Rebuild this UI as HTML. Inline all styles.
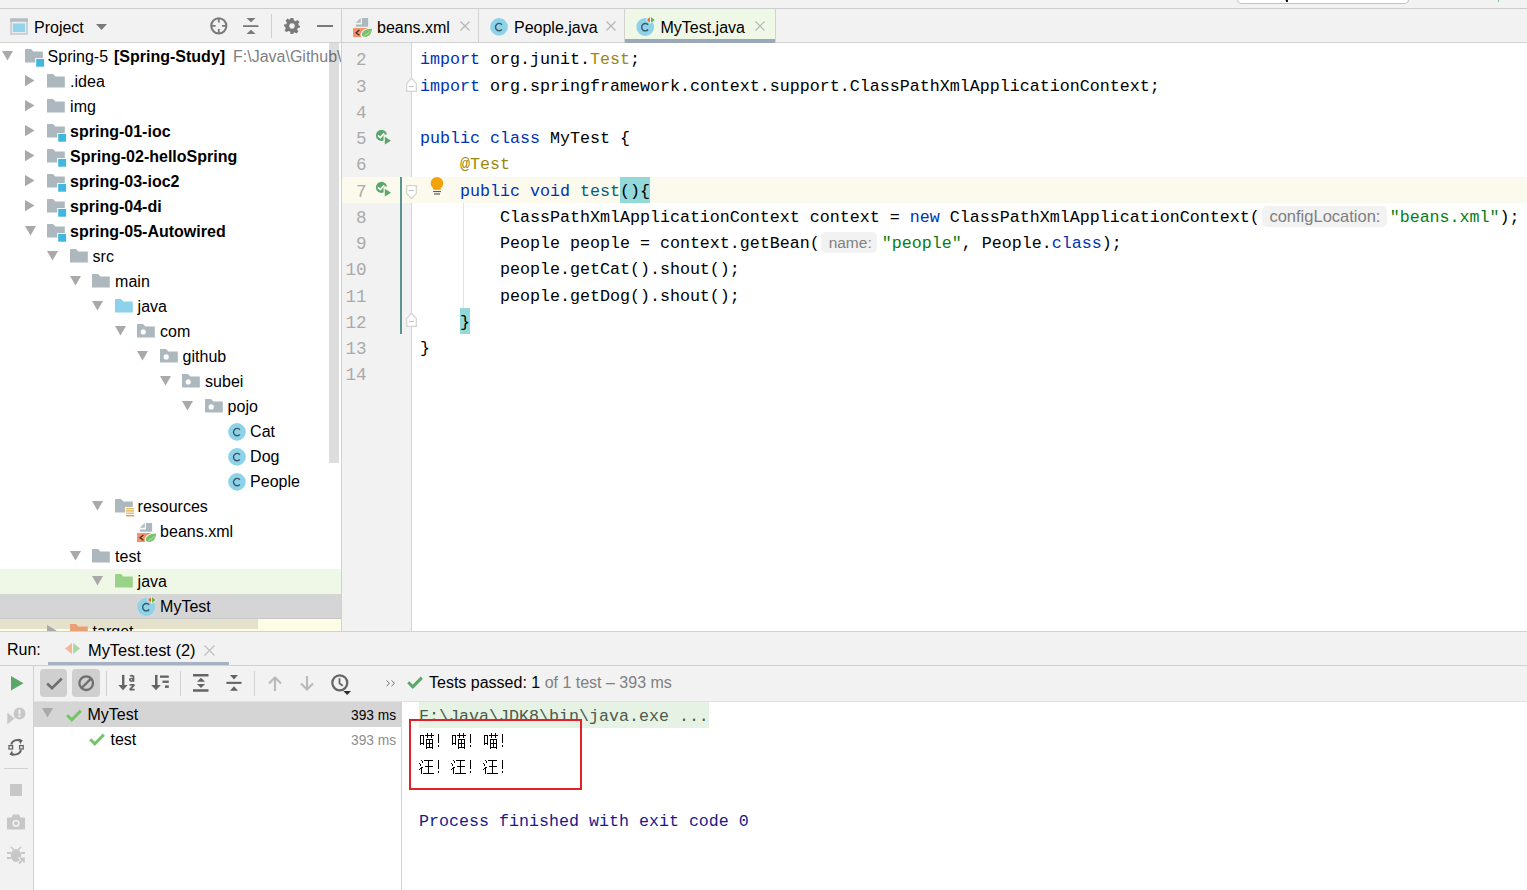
<!DOCTYPE html>
<html><head><meta charset="utf-8">
<style>
*{margin:0;padding:0;box-sizing:border-box}
html,body{width:1527px;height:890px;overflow:hidden;background:#f2f2f2}
body{position:relative;font-family:"Liberation Sans",sans-serif;font-size:16px;color:#000}
.a{position:absolute}
svg{position:absolute;overflow:visible}
.row{position:absolute;left:0;width:341px;height:25px}
.row .lbl{position:absolute;top:0;line-height:25px;white-space:pre;font-size:16px}
.row b{font-weight:700}
.cl{position:absolute;left:420px;height:26.25px;line-height:26.25px;white-space:pre;font-family:"Liberation Mono",monospace;font-size:16.67px;color:#000}
.ln{position:absolute;left:341px;width:25.5px;text-align:right;height:26.25px;line-height:26.25px;font-family:"Liberation Mono",monospace;font-size:17.6px;color:#aaaaaa}
.kw{color:#0033b3}
.an{color:#9e880d}
.st{color:#067d17}
.md{color:#00627a}
.cl{z-index:0}
.bm{position:relative}
.bm::before{content:"";position:absolute;left:0;right:0;top:-4.6px;bottom:-2.1px;background:#93d9d9;z-index:-1}
.hint{display:inline-block;vertical-align:top;height:26.25px;position:relative}
.hint i{position:absolute;left:1.3px;top:1px;height:21px;border-radius:5px;background:#f2f2f2;font-style:normal;font-family:"Liberation Sans",sans-serif;color:#808080;line-height:21px;padding-left:7.5px;white-space:pre}
.ui{position:absolute;white-space:pre;font-size:16px;line-height:20px}
</style></head><body>
<svg width="0" height="0" style="position:absolute">
<defs>
 <symbol id="triD" viewBox="0 0 11 10"><path d="M0 0 H11 L5.5 9.6 Z" fill="#a9a9a9"/></symbol>
 <symbol id="triR" viewBox="0 0 10 12"><path d="M0 0 L9.5 5.6 L0 11.2 Z" fill="#a9a9a9"/></symbol>
 <symbol id="folder" viewBox="0 0 20 20"><path d="M0 0.6 Q0 0 0.6 0 H6 L8.5 2.4 H17.8 V13.6 H0 Z" fill="#adb7be"/></symbol>
 <symbol id="folderblue" viewBox="0 0 20 20"><path d="M0 0.6 Q0 0 0.6 0 H6 L8.5 2.4 H17.8 V13.6 H0 Z" fill="#8dd1ec"/></symbol>
 <symbol id="foldergreen" viewBox="0 0 20 20"><path d="M0 0.6 Q0 0 0.6 0 H6 L8.5 2.4 H17.8 V13.6 H0 Z" fill="#9bd28a"/></symbol>
 <symbol id="folderorange" viewBox="0 0 20 20"><path d="M0 0.6 Q0 0 0.6 0 H6 L8.5 2.4 H17.8 V13.6 H0 Z" fill="#eb9f74"/></symbol>
 <symbol id="package" viewBox="0 0 20 20"><path d="M0 0.6 Q0 0 0.6 0 H6 L8.5 2.4 H17.8 V13.6 H0 Z" fill="#adb7be"/><circle cx="6.2" cy="7.9" r="2.6" fill="#fff"/></symbol>
 <symbol id="module" viewBox="0 0 20 20"><path d="M0 0.6 Q0 0 0.6 0 H6 L8.5 2.4 H17.8 V9 H10.2 V13.6 H0 Z" fill="#adb7be"/><rect x="11.2" y="9.9" width="7.9" height="7.8" fill="#40b6e0"/></symbol>
 <symbol id="resources" viewBox="0 0 20 20"><path d="M0 0.6 Q0 0 0.6 0 H6 L8.5 2.4 H17.8 V8 H10 V13.6 H0 Z" fill="#adb7be"/>
   <rect x="11" y="9" width="8.2" height="1.3" fill="#e8b45a"/><rect x="11" y="11.3" width="8.2" height="1.2" fill="#d9a23d"/><rect x="11" y="13.6" width="8.2" height="1.3" fill="#e8b45a"/><rect x="11" y="16" width="8.2" height="1.4" fill="#d9a23d"/></symbol>
 <symbol id="cls" viewBox="0 0 20 20" overflow="visible"><circle cx="9" cy="8.9" r="8.8" fill="#8cd3e9"/><path d="M11.9 6.8 A3.6 3.7 0 1 0 11.9 11.4" fill="none" stroke="#3d5662" stroke-width="1.4"/></symbol>
 <symbol id="testcls" viewBox="0 0 20 20" overflow="visible"><circle cx="9.2" cy="9" r="8.9" fill="#8cd3e9"/><path d="M12.1 6.9 A3.6 3.7 0 1 0 12.1 11.5" fill="none" stroke="#3d5662" stroke-width="1.4"/>
   <path d="M14.6 -1.8 V5.8 L9.6 2 Z" fill="#fff" opacity="0.85"/><path d="M14.4 -1.8 V5.8 L19.8 2 Z" fill="#fff" opacity="0.85"/>
   <path d="M13.9 -0.9 V4.8 L10.9 2 Z" fill="#f0621f"/><path d="M15 -0.9 V4.8 L18.8 2 Z" fill="#5fb543"/></symbol>
 <symbol id="xml" viewBox="0 0 20 20" overflow="visible"><path d="M9 0 H15.1 V8.8 H2.8 V6.5 H9 Z" fill="#adb7be"/><path d="M2.8 4.8 L7.8 0 V4.8 Z" fill="#b3bdc4"/>
   <path d="M0 10 H17 V12 L12 19 H0 Z" fill="#f4916a"/><path d="M6.4 12 L3 14.7 L6.4 17.3" fill="none" stroke="#3b2b22" stroke-width="1.2"/>
   <path d="M7.6 16.8 C7.8 12.2 13 9.6 19.9 9.5 C20.2 15.6 16.8 19.9 12 19.9 C9.6 19.9 7.6 19 7.6 16.8 Z" fill="#fff"/><path d="M8.7 16.8 C8.8 13 13.2 10.8 19 10.5 C19.1 15.2 16.3 19 12.2 19 C10.3 19 8.7 18.3 8.7 16.8 Z" fill="#7cc26c"/><path d="M11.2 17.6 Q15.2 16.4 17.6 12.8" fill="none" stroke="#d8efd2" stroke-width="0.6"/></symbol>
 <clipPath id="rq"><path d="M-2 -2 H18 V4.5 H7.5 V18 H-2 Z"/></clipPath>
 <symbol id="runicon" viewBox="0 0 16 16" overflow="visible"><circle cx="5.5" cy="5.4" r="5.6" fill="#59a869" clip-path="url(#rq)"/><path d="M1.9 5.3 L4.4 7.5 L8.2 3.2" fill="none" stroke="#fff" stroke-width="1.6"/><path d="M8.8 6.8 L15 10.7 L8.8 14.6 Z" fill="#59a869"/></symbol>
</defs>
</svg>

<!-- top strip -->
<div class="a" style="left:0;top:0;width:1527px;height:8px;background:#f2f2f2"></div>
<div class="a" style="left:1237px;top:-4px;width:172px;height:8px;background:#fff;border:1px solid #c4c4c4;border-radius:4px"></div>
<div class="a" style="left:1286px;top:0;width:2px;height:2px;background:#1a1a1a"></div>
<div class="a" style="left:1285px;top:0;width:1px;height:1px;background:#e0a050"></div>
<div class="a" style="left:1498px;top:0;width:1px;height:1.5px;background:#7cc47c"></div>
<div class="a" style="left:0;top:8px;width:1527px;height:1px;background:#cdcdcd"></div>

<!-- project header -->
<div class="a" style="left:0;top:9px;width:341px;height:33px;background:#f2f2f2"></div>
<svg style="left:10px;top:18px" width="18" height="17"><rect x="0.2" y="0.5" width="17.6" height="16.3" fill="#c3cad0"/><rect x="0.2" y="0.5" width="17.6" height="3.2" fill="#b2bcc3"/><rect x="1.8" y="3.7" width="14.4" height="11.5" fill="#e9ecee"/><rect x="2.9" y="5.5" width="12.1" height="8.5" fill="#93d3ec"/></svg>
<div class="ui" style="left:34px;top:17.5px">Project</div>
<svg style="left:96px;top:24px" width="11" height="7"><path d="M0 0 H11 L5.5 6 Z" fill="#7a7a7a"/></svg>
<svg style="left:210px;top:17px" width="18" height="18"><circle cx="8.8" cy="8.8" r="7.6" fill="none" stroke="#7a7a7a" stroke-width="2"/><path d="M8.8 1 V5.6 M8.8 12 V16.6 M1 8.8 H5.6 M12 8.8 H16.6" stroke="#7a7a7a" stroke-width="1.8"/></svg>
<svg style="left:243px;top:18px" width="16" height="17"><path d="M3.5 0 H12.5 L8 4.2 Z M3.5 16 H12.5 L8 11.8 Z" fill="#7a7a7a"/><rect x="0" y="7.2" width="15.5" height="1.8" fill="#7a7a7a"/></svg>
<div class="a" style="left:271px;top:14px;width:1px;height:24px;background:#d0d0d0"></div>
<svg style="left:284px;top:18px" width="16" height="16" viewBox="0 0 16 16"><path fill="#7a7a7a" fill-rule="evenodd" d="M6.6 0 H9.4 L9.8 2.3 L11.6 3.2 L13.6 1.9 L15.5 3.9 L14.2 5.8 L14.9 7.6 L16 8 V9.4 L13.8 9.9 L13.1 11.7 L14.4 13.6 L12.4 15.5 L10.6 14.2 L9.4 14.9 V16 H6.6 L6.2 13.8 L4.4 13 L2.5 14.3 L0.5 12.3 L1.8 10.5 L1.1 8.7 L0 8.3 V6.6 L2.2 6.2 L2.9 4.4 L1.6 2.5 L3.6 0.5 L5.4 1.8 L6.2 1.1 Z M8 5.2 A2.8 2.8 0 1 0 8.001 5.2 Z"/></svg>
<div class="a" style="left:317px;top:24.5px;width:16px;height:2.5px;background:#7a7a7a"></div>
<div class="a" style="left:0;top:42px;width:341px;height:1px;background:#d1d1d1"></div>

<!-- editor tabs -->
<div class="a" style="left:342px;top:9px;width:1185px;height:33px;background:#f2f2f2"></div>
<div class="a" style="left:341px;top:9px;width:1px;height:622px;background:#d1d1d1"></div>
<div class="a" style="left:342px;top:42px;width:1185px;height:1px;background:#d1d1d1"></div>
<svg style="left:353px;top:18px" width="20" height="20"><use href="#xml"/></svg>
<div class="ui" style="left:377px;top:17.5px">beans.xml</div>
<svg style="left:460px;top:21px" width="10" height="10"><path d="M0.5 0.5 L9.5 9.5 M9.5 0.5 L0.5 9.5" stroke="#b4b4b4" stroke-width="1.1"/></svg>
<div class="a" style="left:478px;top:9px;width:1px;height:33px;background:#d1d1d1"></div>
<svg style="left:490px;top:18px" width="20" height="20"><use href="#cls"/></svg>
<div class="ui" style="left:514px;top:17.5px">People.java</div>
<svg style="left:606px;top:21px" width="10" height="10"><path d="M0.5 0.5 L9.5 9.5 M9.5 0.5 L0.5 9.5" stroke="#b4b4b4" stroke-width="1.1"/></svg>
<div class="a" style="left:624px;top:9px;width:1px;height:33px;background:#d1d1d1"></div>
<div class="a" style="left:625px;top:9px;width:150px;height:30px;background:#eff8e6"></div>
<div class="a" style="left:625px;top:39px;width:150px;height:3.5px;background:#9ba8b9"></div>
<div class="a" style="left:775px;top:9px;width:1px;height:33px;background:#d1d1d1"></div>
<svg style="left:636px;top:18px" width="20" height="20"><use href="#testcls"/></svg>
<div class="ui" style="left:660.5px;top:17.5px">MyTest.java</div>
<svg style="left:755px;top:21px" width="10" height="10"><path d="M0.5 0.5 L9.5 9.5 M9.5 0.5 L0.5 9.5" stroke="#b4b4b4" stroke-width="1.1"/></svg>

<!-- project tree -->
<div class="a" style="left:0;top:43px;width:341px;height:588px;background:#fff;overflow:hidden">
<div class="a" style="left:0;top:-43px;width:341px;height:631px">
<div class="row" style="top:44px;"><svg class="tri" style="left:2.0px;top:7px" width="11" height="10"><use href="#triD"/></svg><svg class="ico" style="left:24.6px;top:5.3px" width="20" height="20"><use href="#module"/></svg><span class="lbl" style="left:47.6px">Spring-5 <b style="margin-left:1.5px">[Spring-Study]</b></span><span class="lbl" style="left:233px;color:#7f7f7f">F:\Java\Github\</span></div>
<div class="row" style="top:69px;"><svg class="tri" style="left:24.5px;top:6px" width="10" height="12"><use href="#triR"/></svg><svg class="ico" style="left:47.1px;top:5.3px" width="20" height="20"><use href="#folder"/></svg><span class="lbl" style="left:70.1px">.idea</span></div>
<div class="row" style="top:94px;"><svg class="tri" style="left:24.5px;top:6px" width="10" height="12"><use href="#triR"/></svg><svg class="ico" style="left:47.1px;top:5.3px" width="20" height="20"><use href="#folder"/></svg><span class="lbl" style="left:70.1px">img</span></div>
<div class="row" style="top:119px;"><svg class="tri" style="left:24.5px;top:6px" width="10" height="12"><use href="#triR"/></svg><svg class="ico" style="left:47.1px;top:5.3px" width="20" height="20"><use href="#module"/></svg><span class="lbl" style="left:70.1px"><b>spring-01-ioc</b></span></div>
<div class="row" style="top:144px;"><svg class="tri" style="left:24.5px;top:6px" width="10" height="12"><use href="#triR"/></svg><svg class="ico" style="left:47.1px;top:5.3px" width="20" height="20"><use href="#module"/></svg><span class="lbl" style="left:70.1px"><b>Spring-02-helloSpring</b></span></div>
<div class="row" style="top:169px;"><svg class="tri" style="left:24.5px;top:6px" width="10" height="12"><use href="#triR"/></svg><svg class="ico" style="left:47.1px;top:5.3px" width="20" height="20"><use href="#module"/></svg><span class="lbl" style="left:70.1px"><b>spring-03-ioc2</b></span></div>
<div class="row" style="top:194px;"><svg class="tri" style="left:24.5px;top:6px" width="10" height="12"><use href="#triR"/></svg><svg class="ico" style="left:47.1px;top:5.3px" width="20" height="20"><use href="#module"/></svg><span class="lbl" style="left:70.1px"><b>spring-04-di</b></span></div>
<div class="row" style="top:219px;"><svg class="tri" style="left:24.5px;top:7px" width="11" height="10"><use href="#triD"/></svg><svg class="ico" style="left:47.1px;top:5.3px" width="20" height="20"><use href="#module"/></svg><span class="lbl" style="left:70.1px"><b>spring-05-Autowired</b></span></div>
<div class="row" style="top:244px;"><svg class="tri" style="left:47.0px;top:7px" width="11" height="10"><use href="#triD"/></svg><svg class="ico" style="left:69.6px;top:5.3px" width="20" height="20"><use href="#folder"/></svg><span class="lbl" style="left:92.6px">src</span></div>
<div class="row" style="top:269px;"><svg class="tri" style="left:69.5px;top:7px" width="11" height="10"><use href="#triD"/></svg><svg class="ico" style="left:92.1px;top:5.3px" width="20" height="20"><use href="#folder"/></svg><span class="lbl" style="left:115.1px">main</span></div>
<div class="row" style="top:294px;"><svg class="tri" style="left:92.0px;top:7px" width="11" height="10"><use href="#triD"/></svg><svg class="ico" style="left:114.6px;top:5.3px" width="20" height="20"><use href="#folderblue"/></svg><span class="lbl" style="left:137.6px">java</span></div>
<div class="row" style="top:319px;"><svg class="tri" style="left:114.5px;top:7px" width="11" height="10"><use href="#triD"/></svg><svg class="ico" style="left:137.1px;top:5.3px" width="20" height="20"><use href="#package"/></svg><span class="lbl" style="left:160.1px">com</span></div>
<div class="row" style="top:344px;"><svg class="tri" style="left:137.0px;top:7px" width="11" height="10"><use href="#triD"/></svg><svg class="ico" style="left:159.6px;top:5.3px" width="20" height="20"><use href="#package"/></svg><span class="lbl" style="left:182.6px">github</span></div>
<div class="row" style="top:369px;"><svg class="tri" style="left:159.5px;top:7px" width="11" height="10"><use href="#triD"/></svg><svg class="ico" style="left:182.1px;top:5.3px" width="20" height="20"><use href="#package"/></svg><span class="lbl" style="left:205.1px">subei</span></div>
<div class="row" style="top:394px;"><svg class="tri" style="left:182.0px;top:7px" width="11" height="10"><use href="#triD"/></svg><svg class="ico" style="left:204.6px;top:5.3px" width="20" height="20"><use href="#package"/></svg><span class="lbl" style="left:227.6px">pojo</span></div>
<div class="row" style="top:419px;"><svg class="ico" style="left:227.5px;top:4.1px" width="20" height="20"><use href="#cls"/></svg><span class="lbl" style="left:250.1px">Cat</span></div>
<div class="row" style="top:444px;"><svg class="ico" style="left:227.5px;top:4.1px" width="20" height="20"><use href="#cls"/></svg><span class="lbl" style="left:250.1px">Dog</span></div>
<div class="row" style="top:469px;"><svg class="ico" style="left:227.5px;top:4.1px" width="20" height="20"><use href="#cls"/></svg><span class="lbl" style="left:250.1px">People</span></div>
<div class="row" style="top:494px;"><svg class="tri" style="left:92.0px;top:7px" width="11" height="10"><use href="#triD"/></svg><svg class="ico" style="left:114.6px;top:5.3px" width="20" height="20"><use href="#resources"/></svg><span class="lbl" style="left:137.6px">resources</span></div>
<div class="row" style="top:519px;"><svg class="ico" style="left:137.1px;top:4px" width="20" height="20"><use href="#xml"/></svg><span class="lbl" style="left:160.1px">beans.xml</span></div>
<div class="row" style="top:544px;"><svg class="tri" style="left:69.5px;top:7px" width="11" height="10"><use href="#triD"/></svg><svg class="ico" style="left:92.1px;top:5.3px" width="20" height="20"><use href="#folder"/></svg><span class="lbl" style="left:115.1px">test</span></div>
<div class="row" style="top:569px;background:#eff8e6;"><svg class="tri" style="left:92.0px;top:7px" width="11" height="10"><use href="#triD"/></svg><svg class="ico" style="left:114.6px;top:5.3px" width="20" height="20"><use href="#foldergreen"/></svg><span class="lbl" style="left:137.6px">java</span></div>
<div class="row" style="top:594px;background:#d5d5d5;"><svg class="ico" style="left:136.8px;top:3.75px" width="20" height="20"><use href="#testcls"/></svg><span class="lbl" style="left:160.1px">MyTest</span></div>
<div class="row" style="top:619px;background:linear-gradient(to bottom,transparent 0,transparent 10px,#fdfde6 10px),linear-gradient(to right,#e4e2cd 0,#e4e2cd 258px,#fdfde6 258px);"><svg class="tri" style="left:47.0px;top:6px" width="10" height="12"><use href="#triR"/></svg><svg class="ico" style="left:69.6px;top:5.3px" width="20" height="20"><use href="#folderorange"/></svg><span class="lbl" style="left:92.6px">target</span></div>
</div>
</div>
<div class="a" style="left:0;top:618px;width:341px;height:1px;background:#c6c6c6"></div>
<div class="a" style="left:328.5px;top:43px;width:10.5px;height:420px;background:rgba(0,0,0,0.135)"></div>

<!-- editor -->
<div class="a" style="left:342px;top:43px;width:1185px;height:588px;background:#fff;overflow:hidden">
<div class="a" style="left:-342px;top:-43px;width:1527px;height:631px">
<div class="a" style="left:342px;top:0;width:69px;height:631px;background:#f2f2f2"></div>
<div class="a" style="left:411px;top:0;width:1px;height:631px;background:#d5d5d5"></div>
<div class="a" style="left:342px;top:176.75px;width:1185px;height:26.25px;background:#fcfaed"></div>
<div class="a" style="left:400px;top:177px;width:1.5px;height:157px;background:#5a9494"></div>
<div class="a" style="left:463px;top:203px;width:1px;height:105px;background:#e3e3e3"></div>
<div class="ln" style="top:47.30px">2</div>
<div class="ln" style="top:73.55px">3</div>
<div class="ln" style="top:99.80px">4</div>
<div class="ln" style="top:126.05px">5</div>
<div class="ln" style="top:152.30px">6</div>
<div class="ln" style="top:178.55px">7</div>
<div class="ln" style="top:204.80px">8</div>
<div class="ln" style="top:231.05px">9</div>
<div class="ln" style="top:257.30px">10</div>
<div class="ln" style="top:283.55px">11</div>
<div class="ln" style="top:309.80px">12</div>
<div class="ln" style="top:336.05px">13</div>
<div class="ln" style="top:362.30px">14</div>
<div class="cl" style="top:47.40px"><span class="kw">import</span> org.junit.<span class="an">Test</span>;</div>
<div class="cl" style="top:73.65px"><span class="kw">import</span> org.springframework.context.support.ClassPathXmlApplicationContext;</div>
<div class="cl" style="top:99.90px"></div>
<div class="cl" style="top:126.15px"><span class="kw">public</span> <span class="kw">class</span> MyTest {</div>
<div class="cl" style="top:152.40px">    <span class="an">@Test</span></div>
<div class="cl" style="top:178.65px">    <span class="kw">public</span> <span class="kw">void</span> <span class="md">test</span><span class="bm">(){</span></div>
<div class="cl" style="top:204.90px">        ClassPathXmlApplicationContext context = <span class="kw">new</span> ClassPathXmlApplicationContext(<span class="hint" style="width:130px"><i style="width:125.2px;font-size:16.5px;left:2.3px">configLocation:</i></span><span class="st">"beans.xml"</span>);</div>
<div class="cl" style="top:231.15px">        People people = context.getBean(<span class="hint" style="width:62px"><i style="width:56.3px;font-size:15.5px">name:</i></span><span class="st">"people"</span>, People.<span class="kw">class</span>);</div>
<div class="cl" style="top:257.40px">        people.getCat().shout();</div>
<div class="cl" style="top:283.65px">        people.getDog().shout();</div>
<div class="cl" style="top:309.90px">    <span class="bm">}</span></div>
<div class="cl" style="top:336.15px">}</div>
<div class="cl" style="top:362.40px"></div>
<svg style="left:376px;top:130px" width="16" height="16"><use href="#runicon"/></svg>
<svg style="left:376px;top:182px" width="16" height="16"><use href="#runicon"/></svg>
<svg style="left:430px;top:176px" width="14" height="20"><circle cx="6.95" cy="7.2" r="6.25" fill="#f0a30a"/><path d="M3.2 10 H10.8 V13.8 H3.2 Z" fill="#f0a30a"/><rect x="3" y="15" width="8" height="1.1" fill="#5e5e5e"/><rect x="4" y="17" width="6" height="2" fill="#9a9a96"/></svg>
<svg style="left:406px;top:78px" width="11" height="14"><path d="M0.7 13.3 V5.4 L5.5 0.2 L10.3 5.4 V13.3 Z" fill="#fff" stroke="#d4d4d4" stroke-width="1.3"/><path d="M3 8.5 H8" stroke="#c4c4c4" stroke-width="1.1"/></svg>
<svg style="left:406px;top:185px" width="11" height="15"><path d="M0.7 0.7 V8.6 L5.5 13.8 L10.3 8.6 V0.7 Z" fill="#fff" stroke="#d4d4d4" stroke-width="1.3"/><path d="M3 5.5 H8" stroke="#c4c4c4" stroke-width="1.1"/></svg>
<svg style="left:406px;top:313px" width="11" height="14"><path d="M0.7 13.3 V5.4 L5.5 0.2 L10.3 5.4 V13.3 Z" fill="#fff" stroke="#d4d4d4" stroke-width="1.3"/><path d="M3 8.5 H8" stroke="#c4c4c4" stroke-width="1.1"/></svg>
</div>
</div>
<div class="a" style="left:0;top:631px;width:1527px;height:1px;background:#d1d1d1"></div>

<!-- run panel -->
<div class="ui" style="left:7px;top:640.3px">Run:</div>
<svg style="left:64.5px;top:643px" width="15" height="12"><path d="M7 0 L0 5.5 L7 11 Z" fill="#f5b59a"/><path d="M8.2 0 V11 L15 5.5 Z" fill="#a8d8a0"/></svg>
<div class="ui" style="left:88px;top:640.3px;font-size:16.4px">MyTest.test (2)</div>
<svg style="left:204px;top:645px" width="11" height="11"><path d="M0.5 0.5 L10.5 10.5 M10.5 0.5 L0.5 10.5" stroke="#bdbdbd" stroke-width="1.1"/></svg>
<div class="a" style="left:48px;top:662px;width:181px;height:3px;background:#a6b2c2"></div>
<div class="a" style="left:0;top:665px;width:1527px;height:1px;background:#d1d1d1"></div>
<div class="a" style="left:33px;top:666px;width:1px;height:224px;background:#d1d1d1"></div>

<!-- left vertical toolbar -->
<svg style="left:11px;top:676px" width="13" height="15"><path d="M0 0 L12.5 7.2 L0 14.4 Z" fill="#59a869"/></svg>
<svg style="left:7px;top:707px" width="20" height="18"><path d="M0.3 5.4 L7.3 11.5 L0.3 17.6 Z" fill="#c7c7c7"/><circle cx="12.5" cy="6.5" r="5.9" fill="#c7c7c7"/><path d="M7.2 11.3 L8.5 8 L11 10.8 Z" fill="#c7c7c7"/><rect x="11.6" y="2.6" width="1.9" height="4.6" fill="#f2f2f2"/><rect x="11.6" y="8.2" width="1.9" height="1.8" fill="#f2f2f2"/></svg>
<svg style="left:8px;top:738px" width="17" height="19"><path d="M3.2 6.6 A6 6 0 0 1 12.6 3.2" fill="none" stroke="#646464" stroke-width="1.9"/><path d="M10.6 0.4 L14.8 2.2 L12.2 6.2 Z" fill="#646464"/><path d="M13 12 A6 6 0 0 1 3.6 15.4" fill="none" stroke="#646464" stroke-width="1.9"/><path d="M5.6 18.2 L1.4 16.4 L4 12.4 Z" fill="#646464"/><rect x="1" y="7.6" width="3.6" height="3.4" fill="none" stroke="#646464" stroke-width="1.3"/><rect x="11.6" y="7.6" width="3.6" height="3.4" fill="none" stroke="#646464" stroke-width="1.3"/></svg>
<div class="a" style="left:4px;top:768px;width:24px;height:1px;background:#d1d1d1"></div>
<div class="a" style="left:10px;top:784px;width:12px;height:12px;background:#c7c7c7"></div>
<svg style="left:7px;top:814px" width="18" height="16"><path d="M0 3.5 H4.5 L6 0.5 H12 L13.5 3.5 H18 V15.5 H0 Z" fill="#c7c7c7"/><circle cx="9" cy="9.3" r="3.6" fill="#f2f2f2"/><circle cx="9" cy="9.3" r="2" fill="#c7c7c7"/></svg>
<svg style="left:7px;top:846px" width="18" height="18"><path d="M4 1 L7 4 M14 1 L11 4" stroke="#c7c7c7" stroke-width="1.6"/><ellipse cx="9" cy="9.5" rx="5.2" ry="6.5" fill="#c7c7c7"/><path d="M0 7 H4 M0 12 H4 M14 7 H18" stroke="#c7c7c7" stroke-width="1.8"/><path d="M10.5 11.5 L17.5 11.5 L17.5 18 Z" fill="#f2f2f2"/><path d="M12 17.5 L17 12.5 M13 12.5 H17 V16.5" fill="none" stroke="#c7c7c7" stroke-width="1.8"/></svg>

<!-- horizontal toolbar -->
<div class="a" style="left:39.6px;top:669px;width:27.5px;height:28px;background:#cfcfcf;border-radius:4px"></div>
<svg style="left:45.5px;top:676.7px" width="17" height="14"><path d="M1.2 6.5 L6 11.2 L15.8 1.5" fill="none" stroke="#6e6e6e" stroke-width="2.6"/></svg>
<div class="a" style="left:72.2px;top:669px;width:27.8px;height:28px;background:#cfcfcf;border-radius:4px"></div>
<svg style="left:78px;top:675px" width="17" height="17"><circle cx="8.2" cy="8.2" r="6.8" fill="none" stroke="#6e6e6e" stroke-width="2.3"/><path d="M3.6 13 L13 3.6" stroke="#6e6e6e" stroke-width="2.3"/></svg>
<div class="a" style="left:106px;top:671px;width:1px;height:25px;background:#d1d1d1"></div>
<svg style="left:118px;top:674px" width="18" height="18"><rect x="4" y="0.9" width="2.4" height="11" fill="#646464"/><path d="M0.3 11 H9.7 L5 16.2 Z" fill="#646464"/><path d="M12 2.1 Q13.9 1 15.5 2.4 L15.5 7.8" fill="none" stroke="#646464" stroke-width="1.7"/><ellipse cx="13.4" cy="5.8" rx="1.7" ry="1.35" fill="none" stroke="#646464" stroke-width="1.6"/><path d="M11.6 10.9 H16.3 L11.8 15.7 H16.6" fill="none" stroke="#646464" stroke-width="1.8" stroke-linejoin="bevel"/></svg>
<svg style="left:151px;top:674px" width="19" height="18"><rect x="4" y="0.9" width="2.5" height="11" fill="#646464"/><path d="M0.2 11 H9.8 L5 16.2 Z" fill="#646464"/><rect x="9" y="1.5" width="8.8" height="2.3" fill="#646464"/><rect x="11.5" y="6.6" width="6.3" height="2.3" fill="#646464"/><rect x="14" y="11.4" width="3.8" height="2.5" fill="#646464"/></svg>
<div class="a" style="left:180px;top:671px;width:1px;height:25px;background:#d1d1d1"></div>
<svg style="left:193px;top:674px" width="16" height="19"><path d="M0 1.35 H15.5 M0 16.45 H15.5" stroke="#646464" stroke-width="2.5"/><path d="M3.9 7.8 L8 3.8 L12.1 7.8 Z M3.9 10.1 L8 14 L12.1 10.1 Z" fill="#646464"/></svg>
<svg style="left:226px;top:674px" width="16" height="18"><path d="M4 1.1 H12 L8 5.5 Z M4 16.8 H12 L8 12.2 Z" fill="#646464"/><path d="M0.4 8.85 H15.5" stroke="#646464" stroke-width="2.1"/></svg>
<div class="a" style="left:254px;top:671px;width:1px;height:25px;background:#d1d1d1"></div>
<svg style="left:268px;top:676px" width="14" height="15"><path d="M7 1.5 V15" stroke="#b9b9b9" stroke-width="2.1"/><path d="M1 7.5 L7 1.5 L13 7.5" fill="none" stroke="#b9b9b9" stroke-width="2.1"/></svg>
<svg style="left:300px;top:676px" width="14" height="15"><path d="M7 0 V13.5" stroke="#b9b9b9" stroke-width="2.1"/><path d="M1 7.5 L7 13.5 L13 7.5" fill="none" stroke="#b9b9b9" stroke-width="2.1"/></svg>
<svg style="left:331px;top:674px" width="21" height="22"><circle cx="8.8" cy="8.8" r="7.5" fill="none" stroke="#646464" stroke-width="2.2"/><path d="M8.5 4.2 V9.4 L11.8 11.8" fill="none" stroke="#646464" stroke-width="1.8"/><path d="M12.3 17 H20 L16.15 21 Z" fill="#2e2e2e"/></svg>
<svg style="left:385.5px;top:679.5px" width="10" height="7"><path d="M0.5 0.5 L3.5 3.3 L0.5 6.1 M5.5 0.5 L8.5 3.3 L5.5 6.1" fill="none" stroke="#6e6e6e" stroke-width="1"/></svg>
<svg style="left:407.3px;top:676.3px" width="16" height="13"><path d="M1.2 6.2 L5.8 10.8 L14.8 1.6" fill="none" stroke="#59a869" stroke-width="3"/></svg>
<div class="ui" style="left:429px;top:673px">Tests passed: 1 <span style="color:#808080">of 1 test – 393 ms</span></div>
<div class="a" style="left:34px;top:701px;width:1493px;height:1px;background:#e2e2e2"></div>

<!-- test tree -->
<div class="a" style="left:34px;top:702px;width:367px;height:188px;background:#fff"></div>
<div class="a" style="left:34px;top:702px;width:367px;height:25px;background:#d5d5d5"></div>
<div class="a" style="left:401px;top:702px;width:1px;height:188px;background:#d1d1d1"></div>
<svg style="left:42px;top:707.7px" width="11" height="10"><use href="#triD"/></svg>
<svg style="left:66px;top:708.5px" width="16" height="13"><path d="M1.2 6.2 L5.8 10.8 L14.8 1.6" fill="none" stroke="#78c36b" stroke-width="3"/></svg>
<div class="ui" style="left:87.5px;top:704.5px">MyTest</div>
<div class="ui" style="left:351px;top:706px;font-size:13.75px">393 ms</div>
<svg style="left:88.5px;top:733px" width="16" height="13"><path d="M1.2 6.2 L5.8 10.8 L14.8 1.6" fill="none" stroke="#78c36b" stroke-width="3"/></svg>
<div class="ui" style="left:110.5px;top:729.5px">test</div>
<div class="ui" style="left:351px;top:731px;font-size:13.75px;color:#8c8c8c">393 ms</div>

<!-- console -->
<div class="a" style="left:402px;top:702px;width:1125px;height:188px;background:#fff"></div>
<div class="a" style="left:419px;top:702px;width:290px;height:26px;background:#e6f3e4"></div>
<div class="cl" style="left:419px;top:703.9px;color:#4d5a4d">F:\Java\JDK8\bin\java.exe ...</div>
<svg style="left:418px;top:733px" width="32" height="17" shape-rendering="crispEdges"><path d="M2.5 2 V12 M5.5 2 V12 M2 2.5 H6 M2 10.5 H6 M7 2.5 H16 M9.5 0 V4.5 M13.5 0 V4.5 M8.5 6 V16 M14.5 6 V16 M8 6.5 H15 M8 10.5 H15 M8 14.5 H15 M11.5 6 V15 M20.5 1 V10" stroke="#000" stroke-width="1.05" fill="none"/><rect x="20" y="12" width="1" height="2"/></svg>
<svg style="left:418px;top:758px" width="32" height="17" shape-rendering="crispEdges"><rect x="3" y="2" width="1" height="1"/><rect x="4" y="3" width="1" height="2"/><rect x="1" y="5" width="1" height="1"/><rect x="2" y="6" width="1" height="2"/><rect x="1" y="11" width="1" height="1"/><rect x="2" y="10" width="1" height="1"/><rect x="4" y="9" width="1" height="1"/><path d="M3.5 9 V16 M6 2.5 H15 M7 8.5 H15 M5 15.5 H16 M10.5 2 V15 M20.5 2 V11" stroke="#000" stroke-width="1.05" fill="none"/><rect x="20" y="13" width="1" height="2"/></svg>
<svg style="left:450px;top:733px" width="32" height="17" shape-rendering="crispEdges"><path d="M2.5 2 V12 M5.5 2 V12 M2 2.5 H6 M2 10.5 H6 M7 2.5 H16 M9.5 0 V4.5 M13.5 0 V4.5 M8.5 6 V16 M14.5 6 V16 M8 6.5 H15 M8 10.5 H15 M8 14.5 H15 M11.5 6 V15 M20.5 1 V10" stroke="#000" stroke-width="1.05" fill="none"/><rect x="20" y="12" width="1" height="2"/></svg>
<svg style="left:450px;top:758px" width="32" height="17" shape-rendering="crispEdges"><rect x="3" y="2" width="1" height="1"/><rect x="4" y="3" width="1" height="2"/><rect x="1" y="5" width="1" height="1"/><rect x="2" y="6" width="1" height="2"/><rect x="1" y="11" width="1" height="1"/><rect x="2" y="10" width="1" height="1"/><rect x="4" y="9" width="1" height="1"/><path d="M3.5 9 V16 M6 2.5 H15 M7 8.5 H15 M5 15.5 H16 M10.5 2 V15 M20.5 2 V11" stroke="#000" stroke-width="1.05" fill="none"/><rect x="20" y="13" width="1" height="2"/></svg>
<svg style="left:482px;top:733px" width="32" height="17" shape-rendering="crispEdges"><path d="M2.5 2 V12 M5.5 2 V12 M2 2.5 H6 M2 10.5 H6 M7 2.5 H16 M9.5 0 V4.5 M13.5 0 V4.5 M8.5 6 V16 M14.5 6 V16 M8 6.5 H15 M8 10.5 H15 M8 14.5 H15 M11.5 6 V15 M20.5 1 V10" stroke="#000" stroke-width="1.05" fill="none"/><rect x="20" y="12" width="1" height="2"/></svg>
<svg style="left:482px;top:758px" width="32" height="17" shape-rendering="crispEdges"><rect x="3" y="2" width="1" height="1"/><rect x="4" y="3" width="1" height="2"/><rect x="1" y="5" width="1" height="1"/><rect x="2" y="6" width="1" height="2"/><rect x="1" y="11" width="1" height="1"/><rect x="2" y="10" width="1" height="1"/><rect x="4" y="9" width="1" height="1"/><path d="M3.5 9 V16 M6 2.5 H15 M7 8.5 H15 M5 15.5 H16 M10.5 2 V15 M20.5 2 V11" stroke="#000" stroke-width="1.05" fill="none"/><rect x="20" y="13" width="1" height="2"/></svg>
<div class="a" style="left:409px;top:719px;width:173px;height:71px;border:2px solid #e0202a"></div>
<div class="cl" style="left:419px;top:808.9px;color:#1a1a8c">Process finished with exit code 0</div>
</body></html>
